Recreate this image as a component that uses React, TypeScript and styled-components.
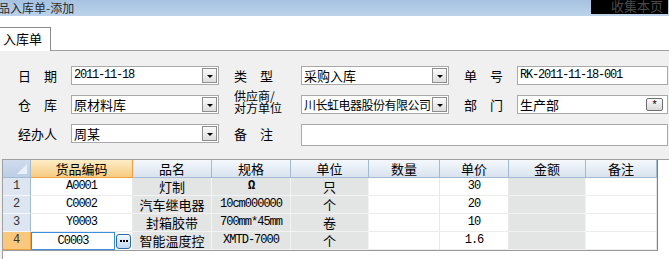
import React from 'react';
import styled, { createGlobalStyle } from 'styled-components';

const CJK = '"Noto Sans CJK SC", "Noto Sans", sans-serif';
const MONO = '"Liberation Mono", "DejaVu Sans Mono", monospace';

const GlobalStyle = createGlobalStyle`
  html, body { margin: 0; padding: 0; background: #fff; }
  body { font-family: ${CJK}; }
  * { box-sizing: border-box; }
`;

const Page = styled.div`
  width: 669px;
  height: 259px;
  overflow: hidden;
  display: flex;
  flex-direction: column;
  background: #f0f0f0;
`;

const TitleBar = styled.div`
  height: 16px;
  flex: none;
  display: flex;
  justify-content: space-between;
  align-items: flex-start;
  background: linear-gradient(#a6c2e1, #bcd3ea);
`;

const Title = styled.span`
  font-size: 12px;
  line-height: 16px;
  color: #2a2a2a;
  margin-left: -2px;
  white-space: nowrap;
`;

const Bookmark = styled.div`
  width: 77px;
  height: 14px;
  margin-right: 1px;
  background: #000;
  color: #4a4a4a;
  font-size: 13px;
  line-height: 11px;
  text-align: right;
  padding-right: 5px;
  overflow: hidden;
`;

const TabStrip = styled.div`
  height: 35px;
  flex: none;
  display: flex;
  align-items: flex-end;
  border-bottom: 1px solid #a0a0a0;
  background: #fff;
`;

const Tab = styled.div`
  width: 51px;
  height: 24px;
  margin-bottom: -1px;
  border-top: 1px solid #8a8a8a;
  border-right: 1px solid #8a8a8a;
  background: #fff;
  font-size: 13px;
  line-height: 22px;
  padding-left: 3px;
  color: #000;
`;

const FormArea = styled.div`
  height: 108px;
  flex: none;
  padding: 15px 0 0 18px;
  display: grid;
  grid-template-columns: 53px 148px 82px 148px 68px 151px;
  grid-template-rows: 19px 19px 22px;
  row-gap: 10px;
`;

const Label = styled.div<{ $indent?: boolean; $small?: boolean }>`
  padding-left: ${(p) => (p.$indent ? '15px' : '0')};
  font-size: ${(p) => (p.$small ? '12px' : '13px')};
  line-height: ${(p) => (p.$small ? '12px' : '19px')};
  color: #000;
  white-space: pre;
  align-self: ${(p) => (p.$small ? 'center' : 'start')};
  margin-top: ${(p) => (p.$small ? '-5px' : '0')};
`;

const Field = styled.div<{ $span?: boolean; $tall?: boolean }>`
  grid-column: ${(p) => (p.$span ? '4 / 7' : 'auto')};
  height: ${(p) => (p.$tall ? '22px' : '19px')};
  align-self: start;
  border: 1px solid #a9a9a9;
  background: #fff;
  display: flex;
  align-items: center;
  padding-left: 2px;
  overflow: hidden;
`;

const FieldText = styled.span<{ $mono?: boolean; $tight?: boolean }>`
  flex: 1;
  min-width: 0;
  overflow: hidden;
  white-space: nowrap;
  font-family: ${(p) => (p.$mono ? MONO : CJK)};
  font-size: ${(p) => (p.$mono ? '12px' : p.$tight ? '12px' : '13px')};
  letter-spacing: ${(p) => (p.$mono ? '-1.2px' : p.$tight ? '-0.5px' : '0')};
  line-height: 17px;
  color: #000;
`;

const DropButton = styled.div`
  flex: none;
  width: 15px;
  height: 15px;
  margin: 0 1px 0 1px;
  border: 1px solid #8e8e8e;
  background: linear-gradient(#fafafa, #dedede);
  display: flex;
  align-items: center;
  justify-content: center;
  &::after {
    content: '';
    display: block;
    margin-top: 2px;
    border-left: 3px solid transparent;
    border-right: 3px solid transparent;
    border-top: 3px solid #000;
  }
`;

const StarButton = styled.div`
  flex: none;
  width: 17px;
  height: 13px;
  margin-right: 4px;
  border: 1px solid #6f6f6f;
  border-radius: 2px;
  background: linear-gradient(#fbfbfb, #d9d9d9);
  font-family: ${MONO};
  font-size: 11px;
  line-height: 12px;
  text-align: center;
  color: #000;
`;

const GridPanel = styled.div`
  flex: 1;
  margin-left: 2px;
  border-left: 1px solid #a0a0a0;
  border-top: 1px solid #a0a0a0;
  background: #fff;
`;

const Table = styled.div`
  width: 655px;
  display: grid;
  grid-template-columns: 28px 102px 79px 79px 78px 71px 69px 77px 71px;
  grid-auto-rows: 18px;
  border-right: 1px solid #7f7f7f;
  border-bottom: 1px solid #9a9a9a;
`;

const HeadCell = styled.div<{ $active?: boolean }>`
  border-right: 1px solid ${(p) => (p.$active ? '#f0a040' : '#a3bad3')};
  border-bottom: 1px solid ${(p) => (p.$active ? '#f0a040' : '#a3bad3')};
  background: ${(p) =>
    p.$active ? 'linear-gradient(#fdedc6, #f8cb80)' : 'linear-gradient(#f5f8fc, #d9e3ef)'};
  font-size: 13px;
  line-height: 17px;
  text-align: center;
  color: #000;
`;

const CornerCell = styled.div`
  border-right: 1px solid #a3bad3;
  border-bottom: 1px solid #a3bad3;
  background: linear-gradient(#cfdcec, #bccfe5);
  display: flex;
  align-items: flex-end;
  justify-content: flex-end;
  padding: 0 3px 3px 0;
`;

const RowHead = styled.div<{ $active?: boolean }>`
  border-right: 1px solid ${(p) => (p.$active ? '#f0a040' : '#a3bad3')};
  border-bottom: 1px solid ${(p) => (p.$active ? '#f0a040' : '#f4f7fb')};
  background: ${(p) => (p.$active ? '#f9c87c' : '#dce5f0')};
  font-family: ${MONO};
  font-size: 12px;
  line-height: 17px;
  text-align: center;
  color: #333;
`;

const Cell = styled.div<{ $shade?: boolean; $mono?: boolean; $bold?: boolean }>`
  border-right: 1px solid ${(p) => (p.$shade ? '#f3f3f3' : '#e8e8e8')};
  border-bottom: 1px solid ${(p) => (p.$shade ? '#f3f3f3' : '#ececec')};
  background: ${(p) => (p.$shade ? '#e3e4e4' : '#fff')};
  font-family: ${(p) => (p.$mono ? MONO : CJK)};
  font-size: ${(p) => (p.$mono ? '12px' : '13px')};
  letter-spacing: ${(p) => (p.$mono ? '-1px' : '0')};
  font-weight: ${(p) => (p.$bold ? 'bold' : 'normal')};
  line-height: 17px;
  text-align: center;
  white-space: nowrap;
  overflow: hidden;
  color: #000;
`;

const EditCell = styled.div`
  display: flex;
  align-items: center;
  background: #fff;
  border-right: 1px solid #e8e8e8;
`;

const Editor = styled.div`
  width: 84px;
  height: 18px;
  border: 1px solid #3c8ee0;
  font-family: ${MONO};
  font-size: 12px;
  letter-spacing: -1px;
  line-height: 16px;
  text-align: center;
  color: #000;
`;

const EllipsisButton = styled.div`
  width: 15px;
  height: 15px;
  margin-left: 1px;
  border: 1px solid #2f6aa6;
  border-radius: 3px;
  background: linear-gradient(#f4f9fe, #c0d7ef);
  display: flex;
  align-items: center;
  justify-content: center;
  gap: 1px;
`;

const Dot = styled.span`
  width: 2px;
  height: 2px;
  background: #000;
`;

type Row = { code: string; name: string; spec: string; unit: string; qty: string; price: string };

const rows: Row[] = [
  { code: 'A0001', name: '灯制', spec: 'Ω', unit: '只', qty: '', price: '30' },
  { code: 'C0002', name: '汽车继电器', spec: '10cm000000', unit: '个', qty: '', price: '20' },
  { code: 'Y0003', name: '封箱胶带', spec: '700mm*45mm', unit: '卷', qty: '', price: '10' },
  { code: 'C0003', name: '智能温度控', spec: 'XMTD-7000', unit: '个', qty: '', price: '1.6' },
];

const headers = ['货品编码', '品名', '规格', '单位', '数量', '单价', '金额', '备注'];

export default function App() {
  return (
    <>
      <GlobalStyle />
      <Page>
        <TitleBar>
          <Title>品入库单-添加</Title>
          <Bookmark>收集本页</Bookmark>
        </TitleBar>
        <TabStrip>
          <Tab>入库单</Tab>
        </TabStrip>
        <FormArea>
          <Label>日　期</Label>
          <Field>
            <FieldText $mono>2011-11-18</FieldText>
            <DropButton />
          </Field>
          <Label $indent>类　型</Label>
          <Field>
            <FieldText>采购入库</FieldText>
            <DropButton />
          </Field>
          <Label $indent>单　号</Label>
          <Field>
            <FieldText $mono>RK-2011-11-18-001</FieldText>
          </Field>

          <Label>仓　库</Label>
          <Field>
            <FieldText>原材料库</FieldText>
            <DropButton />
          </Field>
          <Label $indent $small>{'供应商/\n对方单位'}</Label>
          <Field>
            <FieldText $tight>川长虹电器股份有限公司</FieldText>
            <DropButton />
          </Field>
          <Label $indent>部　门</Label>
          <Field>
            <FieldText>生产部</FieldText>
            <StarButton>*</StarButton>
          </Field>

          <Label>经办人</Label>
          <Field>
            <FieldText>周某</FieldText>
            <DropButton />
          </Field>
          <Label $indent>备　注</Label>
          <Field $span $tall />
        </FormArea>
        <GridPanel>
          <Table>
            <CornerCell>
              <svg width="10" height="10" viewBox="0 0 10 10">
                <polygon points="10,0 10,10 0,10" fill="#e9eff6" />
              </svg>
            </CornerCell>
            {headers.map((h, i) => (
              <HeadCell key={h} $active={i === 0}>
                {h}
              </HeadCell>
            ))}
            {rows.map((r, i) => {
              const last = i === rows.length - 1;
              return (
                <React.Fragment key={r.code + i}>
                  <RowHead $active={last}>{i + 1}</RowHead>
                  {last ? (
                    <EditCell>
                      <Editor>{r.code}</Editor>
                      <EllipsisButton>
                        <Dot />
                        <Dot />
                        <Dot />
                      </EllipsisButton>
                    </EditCell>
                  ) : (
                    <Cell $mono>{r.code}</Cell>
                  )}
                  <Cell $shade>{r.name}</Cell>
                  <Cell $shade $mono $bold={r.spec === 'Ω'}>
                    {r.spec}
                  </Cell>
                  <Cell $shade>{r.unit}</Cell>
                  <Cell>{r.qty}</Cell>
                  <Cell $mono>{r.price}</Cell>
                  <Cell $shade />
                  <Cell />
                </React.Fragment>
              );
            })}
          </Table>
        </GridPanel>
      </Page>
    </>
  );
}
